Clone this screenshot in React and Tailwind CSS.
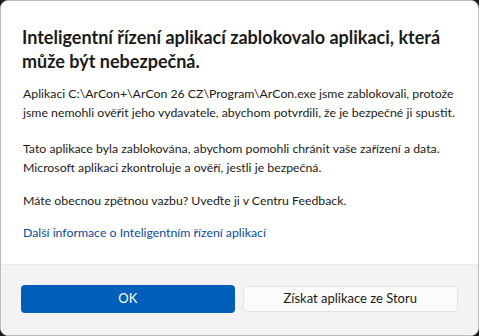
const FONT = "font-['Lato','Open_Sans',sans-serif]";

export default function App() {
  return (
    <div className={`w-[479px] h-[336px] bg-[#1c1c1c] ${FONT}`}>
      <div className="flex h-full w-full flex-col overflow-hidden rounded-[8px] border border-[#bdbdbd] bg-white">
        <div className="flex-1 whitespace-nowrap pl-[21px] pt-[24px] text-[#1b1b1b]">
          <h1 className="text-[18px] font-bold leading-[24px]">
            Inteligentní řízení aplikací zablokovalo aplikaci, která
            <br />
            může být nebezpečná.
          </h1>
          <div className="pl-[1px] text-[12.3px] leading-[19px]">
            <p className="mt-[11px]">
              Aplikaci C:\ArCon+\ArCon 26 CZ\Program\ArCon.exe jsme zablokovali, protože
              <br />
              jsme nemohli ověřit jeho vydavatele, abychom potvrdili, že je bezpečné ji spustit.
            </p>
            <p className="mt-[17px]">
              Tato aplikace byla zablokována, abychom pomohli chránit vaše zařízení a data.
              <br />
              Microsoft aplikaci zkontroluje a ověří, jestli je bezpečná.
            </p>
            <p className="mt-[14px]">
              Máte obecnou zpětnou vazbu? Uveďte ji v Centru Feedback.
            </p>
            <a className="mt-[13px] block text-[#0f4b9a]">
              Další informace o Inteligentním řízení aplikací
            </a>
          </div>
        </div>
        <div className="flex h-[71px] items-center gap-[8px] border-t border-[#ececec] bg-[#f3f3f3] px-[20px] pb-[2px]">
          <button className="h-[28px] flex-1 rounded-[4px] bg-[#005fb8] text-[13px] text-white">
            OK
          </button>
          <button className="h-[26px] flex-1 rounded-[4px] border border-[#e3e3e3] bg-[#fbfbfb] text-[13px] text-[#1b1b1b]">
            Získat aplikace ze Storu
          </button>
        </div>
      </div>
    </div>
  );
}
